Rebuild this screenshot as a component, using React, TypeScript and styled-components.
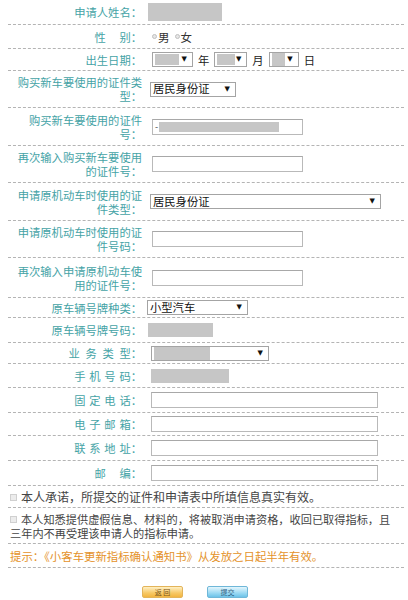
import React from "react";
import styled, { createGlobalStyle } from "styled-components";

const Global = createGlobalStyle`
  html, body { margin: 0; padding: 0; background: #ffffff; }
  body { font-family: "Noto Sans CJK SC", "Noto Sans", sans-serif; }
`;

const Page = styled.div`
  width: 396px;
  margin-left: 8px;
  font-size: 11.3px;
  color: #333;
`;

const Row = styled.div<{ $h: number }>`
  display: grid;
  grid-template-columns: 134px 1fr;
  align-items: center;
  height: ${(p) => p.$h}px;
  box-sizing: border-box;
  border-bottom: 1px dashed #b4b4b4;
`;

const Label = styled.div`
  text-align: right;
  color: #45a3a6;
  font-size: 11.3px;
  line-height: 14px;
  padding-left: 4px;
  white-space: pre-wrap;
`;

const Value = styled.div<{ $pad?: number }>`
  display: flex;
  align-items: center;
  padding-left: ${(p) => p.$pad ?? 6}px;
  gap: 3px;
  min-width: 0;
`;

const Redact = styled.div<{ $w: number; $h: number }>`
  width: ${(p) => p.$w}px;
  height: ${(p) => p.$h}px;
  background: #c6c6c6;
`;

const Field = styled.div<{ $w: number }>`
  width: ${(p) => p.$w}px;
  height: 16px;
  box-sizing: border-box;
  border: 1px solid #b9b9b9;
  border-top-color: #a8a8a8;
  background: #fff;
  display: flex;
  align-items: center;
  padding-left: 2px;
  gap: 1px;
  overflow: hidden;
`;

const Dash = styled.span`
  font-size: 9px;
  line-height: 1;
  color: #444;
`;

const Select = styled.div<{ $w: number }>`
  width: ${(p) => p.$w}px;
  height: 15px;
  box-sizing: border-box;
  border: 1px solid #a4a4a4;
  background: #fff;
  display: flex;
  align-items: center;
  padding-left: 2px;
  padding-right: 5px;
  font-size: 11.3px;
  color: #111;
  line-height: 1;
  overflow: hidden;
`;

const SelectText = styled.span`
  flex: 1;
  display: flex;
  align-items: center;
  white-space: nowrap;
`;

const Arrow = styled.span`
  font-size: 7px;
  color: #111;
  font-family: "DejaVu Sans", sans-serif;
`;

const Unit = styled.span`
  font-size: 11.3px;
  color: #222;
  margin: 0 2px;
`;

const Radio = styled.label`
  display: flex;
  align-items: center;
  gap: 1px;
  font-size: 11.5px;
  color: #333;
  margin-right: 2px;
`;

const Dot = styled.span`
  width: 3px;
  height: 3px;
  border-radius: 50%;
  border: 1px solid #c0c0c0;
  background: #e6e6e6;
`;

const Note = styled.div<{ $h: number; $size: number; $color: string }>`
  height: ${(p) => p.$h}px;
  box-sizing: border-box;
  border-bottom: 1px dashed #b4b4b4;
  display: flex;
  align-items: center;
  padding-left: 2px;
  font-size: ${(p) => p.$size}px;
  line-height: 14px;
  color: ${(p) => p.$color};
`;

const NoteText = styled.div`
  max-width: 386px;
`;

const Box = styled.span`
  display: inline-block;
  width: 5px;
  height: 5px;
  border: 1px solid #d0d0d0;
  background: #ececec;
  margin-right: 4px;
  vertical-align: middle;
  position: relative;
  top: -1px;
`;

const ButtonRow = styled.div`
  display: flex;
  padding-left: 134px;
  padding-top: 18px;
  gap: 24px;
`;

const Btn = styled.button<{ $tone: "orange" | "blue" }>`
  width: 41px;
  height: 12px;
  padding: 0;
  border-radius: 2px;
  border: 1px solid ${(p) => (p.$tone === "orange" ? "#e3b45a" : "#6fb7d8")};
  background: ${(p) =>
    p.$tone === "orange"
      ? "linear-gradient(#fff0c4, #f7c865 60%, #f2b540)"
      : "linear-gradient(#e4f6fd, #9ad9f3 60%, #6cc2e8)"};
  font-family: "Noto Sans CJK SC", sans-serif;
  font-size: 7px;
  line-height: 10px;
  color: ${(p) => (p.$tone === "orange" ? "#7a5418" : "#2f5f80")};
`;

export default function App() {
  return (
    <>
      <Global />
      <Page>
        <Row $h={25}>
          <Label>申请人姓名：</Label>
          <Value>
            <Redact $w={74} $h={18} />
          </Value>
        </Row>
        <Row $h={24}>
          <Label>{"性\u3000\u2009别："}</Label>
          <Value $pad={10}>
            <Radio>
              <Dot />男
            </Radio>
            <Radio>
              <Dot />女
            </Radio>
          </Value>
        </Row>
        <Row $h={22}>
          <Label>出生日期：</Label>
          <Value $pad={10}>
            <Select $w={41}>
              <SelectText>
                <Redact $w={24} $h={11} />
              </SelectText>
              <Arrow>▼</Arrow>
            </Select>
            <Unit>年</Unit>
            <Select $w={33}>
              <SelectText>
                <Redact $w={18} $h={11} />
              </SelectText>
              <Arrow>▼</Arrow>
            </Select>
            <Unit>月</Unit>
            <Select $w={30}>
              <SelectText>
                <Redact $w={13} $h={13} />
              </SelectText>
              <Arrow>▼</Arrow>
            </Select>
            <Unit>日</Unit>
          </Value>
        </Row>
        <Row $h={37}>
          <Label>购买新车要使用的证件类型：</Label>
          <Value $pad={8}>
            <Select $w={86}>
              <SelectText>居民身份证</SelectText>
              <Arrow>▼</Arrow>
            </Select>
          </Value>
        </Row>
        <Row $h={38}>
          <Label>购买新车要使用的证件号：</Label>
          <Value $pad={10}>
            <Field $w={151}>
              <Dash>-</Dash>
              <Redact $w={120} $h={10} />
            </Field>
          </Value>
        </Row>
        <Row $h={37}>
          <Label>再次输入购买新车要使用的证件号：</Label>
          <Value $pad={10}>
            <Field $w={151} />
          </Value>
        </Row>
        <Row $h={38}>
          <Label>申请原机动车时使用的证件类型：</Label>
          <Value $pad={8}>
            <Select $w={231}>
              <SelectText>居民身份证</SelectText>
              <Arrow>▼</Arrow>
            </Select>
          </Value>
        </Row>
        <Row $h={37}>
          <Label>申请原机动车时使用的证件号码：</Label>
          <Value $pad={10}>
            <Field $w={151} />
          </Value>
        </Row>
        <Row $h={40}>
          <Label>再次输入申请原机动车使用的证件号：</Label>
          <Value $pad={10}>
            <Field $w={151} />
          </Value>
        </Row>
        <Row $h={20}>
          <Label>原车辆号牌种类：</Label>
          <Value $pad={5}>
            <Select $w={101}>
              <SelectText>小型汽车</SelectText>
              <Arrow>▼</Arrow>
            </Select>
          </Value>
        </Row>
        <Row $h={25}>
          <Label>原车辆号牌号码：</Label>
          <Value>
            <Redact $w={65} $h={14} />
          </Value>
        </Row>
        <Row $h={21}>
          <Label>{"业\u2002务\u2002类\u2002型："}</Label>
          <Value $pad={9}>
            <Select $w={118}>
              <SelectText>
                <Redact $w={56} $h={13} />
              </SelectText>
              <Arrow>▼</Arrow>
            </Select>
          </Value>
        </Row>
        <Row $h={24}>
          <Label>{"手\u2004机\u2004号\u2004码："}</Label>
          <Value $pad={9}>
            <Redact $w={78} $h={14} />
          </Value>
        </Row>
        <Row $h={25}>
          <Label>{"固\u2004定\u2004电\u2004话："}</Label>
          <Value $pad={9}>
            <Field $w={227} />
          </Value>
        </Row>
        <Row $h={23}>
          <Label>{"电\u2004子\u2004邮\u2004箱："}</Label>
          <Value $pad={9}>
            <Field $w={227} />
          </Value>
        </Row>
        <Row $h={25}>
          <Label>{"联\u2004系\u2004地\u2004址："}</Label>
          <Value $pad={9}>
            <Field $w={227} />
          </Value>
        </Row>
        <Row $h={25}>
          <Label>{"邮\u3000\u2009编："}</Label>
          <Value $pad={9}>
            <Field $w={227} />
          </Value>
        </Row>
        <Note $h={22} $size={12} $color="#444">
          <NoteText>
            <Box />
            本人承诺，所提交的证件和申请表中所填信息真实有效。
          </NoteText>
        </Note>
        <Note $h={36} $size={11.2} $color="#444">
          <NoteText>
            <Box />
            本人知悉提供虚假信息、材料的，将被取消申请资格，收回已取得指标，且三年内不再受理该申请人的指标申请。
          </NoteText>
        </Note>
        <Note $h={24} $size={11.4} $color="#e4922a">
          <NoteText>提示：《小客车更新指标确认通知书》从发放之日起半年有效。</NoteText>
        </Note>
        <ButtonRow>
          <Btn $tone="orange">返 回</Btn>
          <Btn $tone="blue">提交</Btn>
        </ButtonRow>
      </Page>
    </>
  );
}
